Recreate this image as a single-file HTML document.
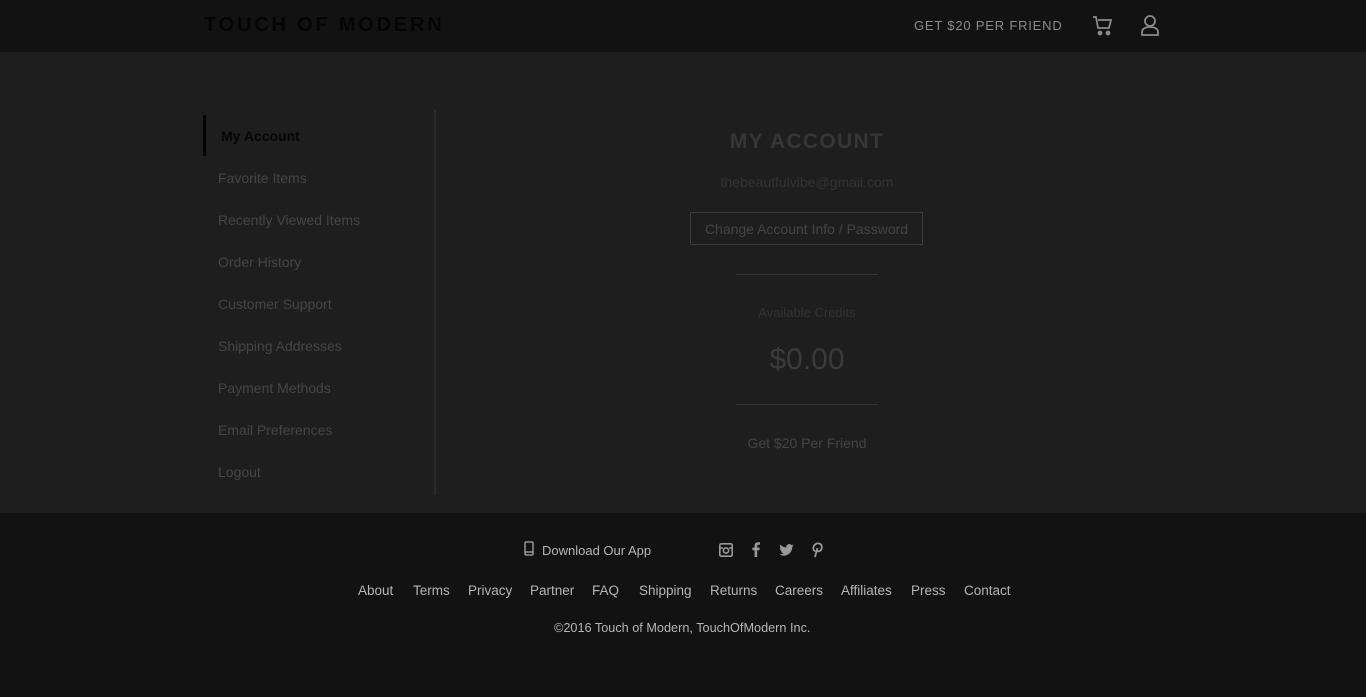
<!DOCTYPE html>
<html><head><style>
*{margin:0;padding:0;box-sizing:border-box}
body{width:1366px;height:697px;background:#121212;font-family:"Liberation Sans",sans-serif;overflow:hidden;position:relative}
.hdr{position:absolute;top:0;left:0;width:1366px;height:52px;background:#121212}
.logo{position:absolute;left:204px;top:14px;font-size:20px;letter-spacing:2.8px;color:#050505;font-weight:bold}
.gf{position:absolute;left:914px;top:18px;font-size:13px;letter-spacing:.8px;color:#8a8a8a}
.main{position:absolute;top:52px;left:0;width:1366px;height:461px;background:#1e1e1e}
.side{position:absolute;left:203px;top:110px;width:233px;height:385px;border-right:2px solid #2a2a2a}
.side div{position:absolute;left:15px;font-size:14px;color:#454545}
.bar{position:absolute;left:203px;top:115px;width:3px;height:41px;background:#000}
.c{position:absolute;left:0;width:1614px;text-align:center;color:#3e3e3e}
.ft{position:absolute;font-size:13.5px;color:#b5b5b5}
</style></head><body>
<div class="hdr">
<div class="logo">TOUCH OF MODERN</div>
<div class="gf">GET $20 PER FRIEND</div>
<svg style="position:absolute;left:1092px;top:15px" width="22" height="22" viewBox="0 0 22 22" fill="none" stroke="#8a8a8a" stroke-width="1.8"><path d="M1 2h3l2 11h11l2-8H6"/><circle cx="8" cy="18" r="1.5" fill="#8a8a8a"/><circle cx="16" cy="18" r="1.5" fill="#8a8a8a"/></svg>
<svg style="position:absolute;left:1140px;top:14px" width="20" height="22" viewBox="0 0 20 22" fill="none" stroke="#8a8a8a" stroke-width="1.8"><circle cx="10" cy="7" r="5"/><path d="M2 21v-3c0-3 3-5 8-5s8 2 8 5v3z"/></svg>
</div>
<div class="main"></div>
<div class="bar"></div>
<div class="side">
<div style="top:18px;left:18px;color:#050505;font-weight:bold;font-size:14px">My Account</div>
<div style="top:60px">Favorite Items</div>
<div style="top:102px">Recently Viewed Items</div>
<div style="top:144px">Order History</div>
<div style="top:186px">Customer Support</div>
<div style="top:228px">Shipping Addresses</div>
<div style="top:270px">Payment Methods</div>
<div style="top:312px">Email Preferences</div>
<div style="top:354px">Logout</div>
</div>
<div class="c" style="top:130px;font-size:21px;letter-spacing:1.3px;font-weight:bold;color:#363636">MY ACCOUNT</div>
<div class="c" style="top:174px;font-size:14px;color:#333">thebeautfulvibe@gmail.com</div>
<div style="position:absolute;left:690px;top:212px;width:233px;height:33px;border:1px solid #3a3a3a;color:#444;font-size:14px;text-align:center;line-height:33px">Change Account Info / Password</div>
<div style="position:absolute;left:736px;top:274px;width:142px;height:1px;background:#333"></div>
<div class="c" style="top:305px;font-size:13px;color:#333">Available Credits</div>
<div class="c" style="top:343px;font-size:30px;color:#3a3a3a">$0.00</div>
<div style="position:absolute;left:736px;top:404px;width:142px;height:1px;background:#333"></div>
<div class="c" style="top:435px;font-size:14px;color:#444">Get $20 Per Friend</div>
<svg style="position:absolute;left:524px;top:541px" width="10" height="15" viewBox="0 0 10 15" fill="none" stroke="#aaa" stroke-width="1.3"><rect x="1" y="1" width="8" height="13" rx="1"/><path d="M1 11h8"/></svg>
<div class="ft" style="left:542px;top:543px;font-size:13px">Download Our App</div>
<svg style="position:absolute;left:719px;top:543px" width="14" height="14" viewBox="0 0 14 14"><rect x="0.8" y="0.8" width="12.4" height="12.4" rx="1.5" fill="none" stroke="#999" stroke-width="1.6"/><circle cx="7" cy="7.5" r="2.6" fill="none" stroke="#999" stroke-width="1.6"/><path d="M1 5h3M10 5h3" stroke="#999" stroke-width="1.5"/></svg>
<svg style="position:absolute;left:752px;top:542px" width="8" height="15" viewBox="0 0 8 15"><path fill="#999" d="M5.2 15V8.2h2.2l.3-2.6H5.2V4c0-.8.2-1.3 1.3-1.3H8V.4C7.7.3 6.9.2 6 .2 4 .2 2.6 1.4 2.6 3.7v1.9H.4v2.6h2.2V15z"/></svg>
<svg style="position:absolute;left:779px;top:544px" width="15" height="12" viewBox="0 0 24 20"><path fill="#999" d="M24 2.4a10 10 0 0 1-2.8.8A5 5 0 0 0 23.3.5a10 10 0 0 1-3.1 1.2A4.9 4.9 0 0 0 11.8 6 14 14 0 0 1 1.7.9a4.9 4.9 0 0 0 1.5 6.6A4.9 4.9 0 0 1 1 6.9 4.9 4.9 0 0 0 4.9 11.8a5 5 0 0 1-2.2.1 4.9 4.9 0 0 0 4.6 3.4A9.9 9.9 0 0 1 0 17.3 14 14 0 0 0 7.5 19.5c9 0 14-7.5 14-14v-.6A10 10 0 0 0 24 2.4z"/></svg>
<svg style="position:absolute;left:812px;top:542px" width="11" height="16" viewBox="0 0 11 16" fill="none" stroke="#999" stroke-width="1.8"><path d="M3 15l2.5-9"/><path d="M3.5 9.5C1.5 8.5 1 6.5 1.5 5 2.5 2 5 1 7 1.5s3 2.2 2.8 4.3C9.5 8.5 7.5 10 5 9"/></svg>
<div class="ft" style="left:358px;top:583px">About</div>
<div class="ft" style="left:413px;top:583px">Terms</div>
<div class="ft" style="left:468px;top:583px">Privacy</div>
<div class="ft" style="left:530px;top:583px">Partner</div>
<div class="ft" style="left:592px;top:583px">FAQ</div>
<div class="ft" style="left:639px;top:583px">Shipping</div>
<div class="ft" style="left:710px;top:583px">Returns</div>
<div class="ft" style="left:775px;top:583px">Careers</div>
<div class="ft" style="left:841px;top:583px">Affiliates</div>
<div class="ft" style="left:911px;top:583px">Press</div>
<div class="ft" style="left:964px;top:583px">Contact</div>
<div class="ft" style="left:554px;top:621px;font-size:12.7px">©2016 Touch of Modern, TouchOfModern Inc.</div>
</body></html>
